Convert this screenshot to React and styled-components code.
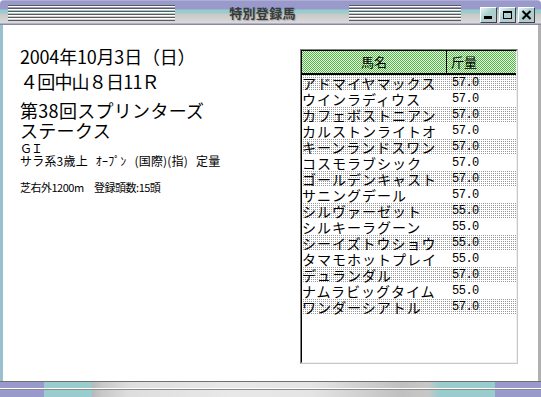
import React from 'react';
import styled, { createGlobalStyle } from 'styled-components';

const GlobalStyle = createGlobalStyle`
  html, body {
    margin: 0;
    padding: 0;
    background: #ffffff;
  }
  body {
    font-family: "Noto Sans CJK JP", "Liberation Sans", sans-serif;
    color: #000000;
  }
`;

const Window = styled.div`
  display: flex;
  flex-direction: column;
  width: 541px;
  height: 397px;
  background: #ffffff;
  overflow: hidden;
`;

const TitleBar = styled.div`
  display: flex;
  align-items: center;
  height: 25px;
  padding: 0 6px 0 8px;
  box-sizing: border-box;
  background: linear-gradient(
    to bottom,
    #c4c4d8 0,
    #9999cc 1px,
    #9999cc 9px,
    #99cccc 10px,
    #99cccc 13px,
    #c8c8c8 14px,
    #dadada 23px,
    #8888aa 24px,
    #8888aa 25px
  );
  border-radius: 4px 4px 0 0;
`;

const Stripes = styled.div`
  width: ${(p) => p.$w}px;
  height: 16px;
  margin-top: 1px;
  background: repeating-linear-gradient(
    to bottom,
    #5a5a5a 0,
    #5a5a5a 1px,
    #ffffff 1px,
    #ffffff 2px,
    transparent 2px,
    transparent 3px
  );
`;

const Title = styled.div`
  width: 173px;
  text-align: center;
  font-size: 13px;
  font-weight: 700;
  line-height: 16px;
  color: #3a3a3a;
  letter-spacing: 0.3px;
  text-shadow: 1px 1px 1px rgba(0, 0, 0, 0.25);
  margin-left: 1px;
`;

const Buttons = styled.div`
  display: flex;
  gap: 2px;
  margin-left: auto;
  margin-top: 4px;
`;

const WinButton = styled.div`
  display: flex;
  align-items: center;
  justify-content: center;
  width: 17px;
  height: 16px;
  box-sizing: border-box;
  border-top: 1px solid #ffffff;
  border-left: 1px solid #ffffff;
  border-right: 1px solid #404040;
  border-bottom: 1px solid #404040;
  background: linear-gradient(135deg, #e8f0f0 0%, #a8d0d0 45%, #c0c8c8 100%);
`;

const Body = styled.div`
  display: flex;
  flex: 1;
  border-left: 3px solid #99c0cc;
  border-right: 3px solid #b0b0b0;
`;

const Info = styled.div`
  display: flex;
  flex-direction: column;
  width: 297px;
  padding: 21px 0 0 17px;
  box-sizing: border-box;
`;

const DateLine = styled.div`
  font-size: 18px;
  line-height: 20px;
  letter-spacing: -0.2px;
`;

const RaceLine = styled.div`
  font-size: 18px;
  line-height: 20px;
  margin-top: 5px;
  letter-spacing: -0.8px;
`;

const RaceName = styled.div`
  font-size: 18px;
  line-height: 20px;
  margin-top: 9px;
  letter-spacing: 0.3px;
`;

const Grade = styled.div`
  font-size: 12px;
  line-height: 14px;
  margin-top: 1px;
  letter-spacing: -1px;
`;

const Condition = styled.div`
  font-size: 12px;
  line-height: 14px;
  margin-top: -1px;
  letter-spacing: 0.2px;
  word-spacing: 5px;
`;

const Course = styled.div`
  font-size: 11px;
  line-height: 13px;
  margin-top: 13px;
  letter-spacing: -0.5px;
`;

const TableBox = styled.div`
  display: flex;
  flex-direction: column;
  width: 218px;
  height: 315px;
  margin-top: 24px;
  box-sizing: border-box;
  border-top: 1px solid #808080;
  border-left: 1px solid #808080;
  border-right: 1px solid #c8c8c8;
  border-bottom: 1px solid #c8c8c8;
`;

const TableInner = styled.div`
  flex: 1;
  border-top: 1px solid #000000;
  border-left: 1px solid #000000;
  border-right: 1px solid #f0f0f0;
  border-bottom: 1px solid #f0f0f0;
  background: #ffffff;
`;

const HeaderRow = styled.div`
  display: grid;
  grid-template-columns: 145px 1fr;
  height: 22px;
  border-bottom: 2px solid #000000;
  background-color: #f0f8e0;
  background-image: repeating-conic-gradient(#4cb84c 0 25%, transparent 0 50%);
  background-size: 2px 2px;
`;

const HeaderCell = styled.div`
  font-size: 13px;
  line-height: 22px;
  text-align: ${(p) => p.$align};
  padding-left: ${(p) => (p.$align === 'left' ? 4 : 0)}px;
  border-right: ${(p) => (p.$divider ? '1px solid #000000' : 'none')};
`;

const Row = styled.div`
  display: grid;
  grid-template-columns: 146px 1fr;
  height: 16px;
  background-color: #ffffff;
  background-image: ${(p) =>
    p.$dotted ? 'conic-gradient(#9a9a9a 0 25%, transparent 0 100%)' : 'none'};
  background-size: 2px 2px;
`;

const NameCell = styled.div`
  font-size: 14px;
  line-height: 16px;
  letter-spacing: 1px;
  white-space: nowrap;
`;

const WeightCell = styled.div`
  font-family: "Liberation Mono", monospace;
  font-size: 12px;
  line-height: 16px;
  padding-left: 4px;
  letter-spacing: -0.5px;
  color: #000000;
`;

const BottomBar = styled.div`
  height: 16px;
  border-top: 1px solid #707070;
  box-sizing: border-box;
  background:
    linear-gradient(
      to bottom,
      transparent 6px,
      #ffffff 6px,
      #ffffff 7px,
      #8a8a8a 7px,
      #8a8a8a 8px,
      transparent 8px
    ),
    linear-gradient(
      to right,
      #9999cc 0,
      #9999cc 44px,
      #99cccc 44px,
      #99cccc 92px,
      #b8b8b8 92px,
      #c8c8c8 102px,
      #dedede 130px,
      #e8e8e8 230px,
      #e4e4e4 312px,
      #d4d4d4 352px,
      #c0c0c0 402px,
      #c8c8c8 428px,
      #99cccc 440px,
      #99cccc 495px,
      #9999cc 495px,
      #9999cc 541px
    );
`;

const horses = [
  ['アドマイヤマックス', '57.0'],
  ['ウインラディウス', '57.0'],
  ['カフェボストニアン', '57.0'],
  ['カルストンライトオ', '57.0'],
  ['キーンランドスワン', '57.0'],
  ['コスモラブシック', '57.0'],
  ['ゴールデンキャスト', '57.0'],
  ['サニングデール', '57.0'],
  ['シルヴァーゼット', '55.0'],
  ['シルキーラグーン', '55.0'],
  ['シーイズトウショウ', '55.0'],
  ['タマモホットプレイ', '55.0'],
  ['デュランダル', '57.0'],
  ['ナムラビッグタイム', '55.0'],
  ['ワンダーシアトル', '57.0'],
];

const App = () => {
  return (
    <>
      <GlobalStyle />
      <Window>
        <TitleBar>
          <Stripes $w={167} />
          <Title>特別登録馬</Title>
          <Stripes $w={112} />
          <Buttons>
            <WinButton>
              <svg width='11' height='10' viewBox='0 0 11 10'>
                <rect x='1' y='6' width='8' height='3' fill='#000' />
              </svg>
            </WinButton>
            <WinButton>
              <svg width='11' height='10' viewBox='0 0 11 10'>
                <rect x='1.5' y='1.5' width='8' height='7' fill='none' stroke='#000' />
                <rect x='1' y='1' width='9' height='2' fill='#000' />
              </svg>
            </WinButton>
            <WinButton>
              <svg width='11' height='10' viewBox='0 0 11 10'>
                <path d='M1.5 1 L9.5 9 M9.5 1 L1.5 9' stroke='#000' strokeWidth='2' />
              </svg>
            </WinButton>
          </Buttons>
        </TitleBar>
        <Body>
          <Info>
            <DateLine>2004年10月3日（日）</DateLine>
            <RaceLine>４回中山８日11Ｒ</RaceLine>
            <RaceName>
              第38回スプリンターズ
              <br />
              ステークス
            </RaceName>
            <Grade>ＧＩ</Grade>
            <Condition>サラ系3歳上 ｵｰﾌﾟﾝ (国際)(指) 定量</Condition>
            <Course>芝右外1200m　登録頭数:15頭</Course>
          </Info>
          <TableBox>
            <TableInner>
              <HeaderRow>
                <HeaderCell $align='center' $divider>
                  馬名
                </HeaderCell>
                <HeaderCell $align='left'>斤量</HeaderCell>
              </HeaderRow>
              {horses.map(([name, weight], i) => (
                <Row key={name} $dotted={i % 2 === 0}>
                  <NameCell>{name}</NameCell>
                  <WeightCell>{weight}</WeightCell>
                </Row>
              ))}
            </TableInner>
          </TableBox>
        </Body>
        <BottomBar />
      </Window>
    </>
  );
};

export default App;
